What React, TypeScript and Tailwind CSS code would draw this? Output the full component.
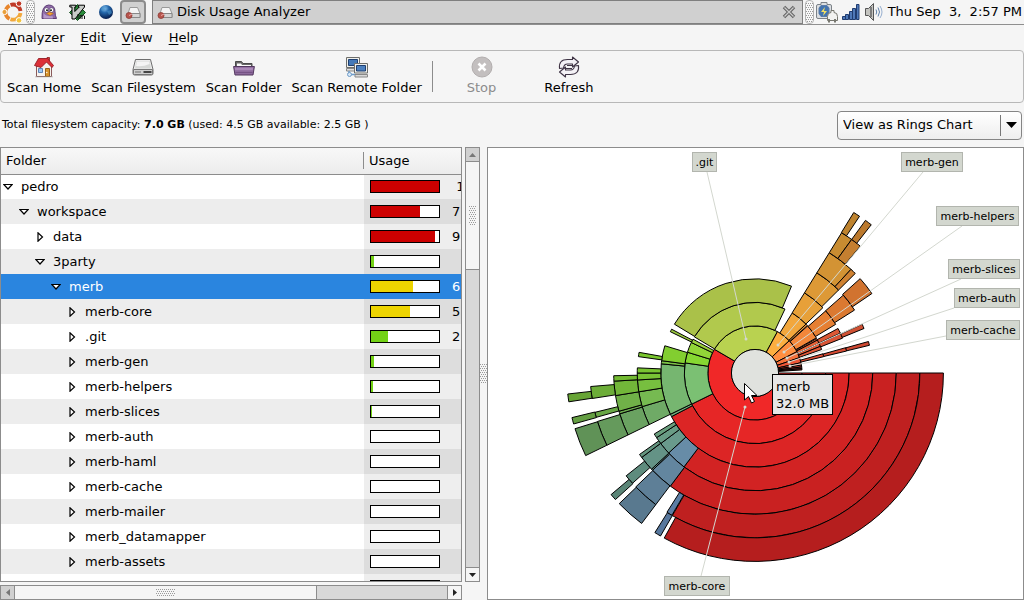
import { FC, ReactNode, useState } from 'react';

interface FolderRow {
  name: string;
  level: number;
  open?: boolean;
  usage: number;
  color?: string;
  percent?: string;
}

// [ring, start angle, end angle, base colour], angles clockwise from 3 o'clock
type Segment = [number, number, number, string];

interface ChartLabel {
  text: string;
  x: number;
  y: number;
  width: number;
  from: [number, number];
  to: [number, number];
}

const RED = '#cc0000';
const YELLOW = '#edd400';
const GREEN = '#73d216';

const folders: FolderRow[] = [
  { name: 'pedro', level: 0, open: true, usage: 100, color: RED, percent: ' 1' },
  { name: 'workspace', level: 1, open: true, usage: 72, color: RED, percent: '7' },
  { name: 'data', level: 2, usage: 94, color: RED, percent: '9' },
  { name: '3party', level: 2, open: true, usage: 4, color: GREEN },
  { name: 'merb', level: 3, open: true, usage: 62, color: YELLOW, percent: '6' },
  { name: 'merb-core', level: 4, usage: 58, color: YELLOW, percent: '5' },
  { name: '.git', level: 4, usage: 25, color: GREEN, percent: '2' },
  { name: 'merb-gen', level: 4, usage: 4, color: GREEN },
  { name: 'merb-helpers', level: 4, usage: 3, color: GREEN },
  { name: 'merb-slices', level: 4, usage: 1, color: GREEN },
  { name: 'merb-auth', level: 4, usage: 0 },
  { name: 'merb-haml', level: 4, usage: 0 },
  { name: 'merb-cache', level: 4, usage: 0 },
  { name: 'merb-mailer', level: 4, usage: 0 },
  { name: 'merb_datamapper', level: 4, usage: 0 },
  { name: 'merb-assets', level: 4, usage: 0 },
  { name: 'merb-perf', level: 4, usage: 0 },
];

const segments: Segment[] = [
  // merb-core
  [1, 0, 210.3, '#f02828'],
  [2, 0, 153.8, '#f02828'],
  [3, 0, 152.4, '#f02828'],
  [4, 0, 127.1, '#f02828'],
  [5, 0, 126.8, '#f02828'],
  [6, 0, 120.1, '#f02828'],
  [7, 0, 118.8, '#f02828'],
  // blue
  [6, 120.3, 122.3, '#749ed0'],
  [7, 120.1, 122.1, '#749ed0'],
  [4, 127.1, 137.2, '#76a0be'],
  [5, 126.8, 136.5, '#76a0be'],
  [6, 127, 136.3, '#76a0be'],
  [7, 127, 136.1, '#76a0be'],
  // teal
  [4, 137.2, 143.2, '#78b0a0'],
  [4, 143.2, 146.7, '#78b298'],
  [4, 146.7, 148.8, '#78b48e'],
  [5, 136.5, 137.1, '#78aca6'],
  [5, 137.1, 143.3, '#78b0a0'],
  [5, 143.3, 144.8, '#78b298'],
  [6, 138, 141.4, '#78b09e'],
  [7, 137.8, 139.8, '#78b09e'],
  [3, 152.4, 154, '#79ba84'],
  // green
  [2, 153.8, 188.2, '#80c878'],
  [3, 154, 185.6, '#80c67a'],
  [4, 154, 163.4, '#7fc274'],
  [5, 154, 163.2, '#7fc274'],
  [6, 154, 162.9, '#7fc274'],
  [7, 154, 162.8, '#7fc274'],
  [3, 185.6, 187.5, '#86d24c'],
  [4, 163.4, 170.8, '#86d45c'],
  [4, 170.8, 176.6, '#88da48'],
  [4, 176.6, 180, '#8ade3c'],
  [4, 180, 182.5, '#8ae038'],
  [5, 163.2, 164.3, '#84d060'],
  [5, 164.3, 170.8, '#86d456'],
  [5, 170.8, 176.7, '#88da44'],
  [5, 176.7, 178.9, '#8ade3c'],
  [6, 164.4, 166.2, '#84d258'],
  [6, 171.1, 175.3, '#88da46'],
  [7, 164.3, 166.3, '#84d258'],
  [7, 171.2, 173.6, '#88da46'],
  [2, 188.2, 197.1, '#8ce034'],
  [3, 187.5, 196.8, '#8ee034'],
  [4, 188, 190.1, '#8ae234'],
  [2, 197.1, 205.6, '#98de3a'],
  [2, 205.6, 208.6, '#a2da40'],
  [3, 206, 207.7, '#a6d844'],
  // .git
  [1, 210.3, 298.5, '#b9d250'],
  [2, 210.8, 295.1, '#b9d250'],
  [3, 211.2, 292.8, '#b9d250'],
  // merb-gen
  [1, 298.5, 316.7, '#fcae40'],
  [2, 301.8, 316.2, '#fcae40'],
  [2, 316.2, 317.8, '#f89c3e'],
  [3, 301.7, 316.1, '#fcae3e'],
  [4, 301.7, 315.2, '#fcae3e'],
  [5, 301.7, 312.8, '#fcb03e'],
  [5, 312.8, 315.2, '#f89c3c'],
  [6, 301.7, 305.9, '#fcb03e'],
  [6, 305.9, 309.7, '#f8a03c'],
  [7, 301.6, 303.7, '#fcae3e'],
  [7, 305.9, 308.1, '#f8a03c'],
  // merb-helpers
  [1, 316.7, 333, '#ff8e40'],
  [2, 318.2, 330.2, '#fc8c3c'],
  [3, 318.7, 328.9, '#fa8a38'],
  [4, 318.6, 327.7, '#fa8a38'],
  [5, 318.1, 325.8, '#fa8a38'],
  // merb-slices
  [1, 333, 341, '#f4703a'],
  [2, 330.8, 332.2, '#e86836'],
  [2, 332.2, 335.2, '#f0663a'],
  [2, 335.2, 337.8, '#ee603a'],
  [2, 337.8, 340.6, '#ea5a38'],
  [3, 331.8, 335, '#ee603a'],
  [3, 335.3, 338.3, '#ec5c3a'],
  [4, 335.5, 337.8, '#ec5c3a'],
  // merb-auth
  [1, 341, 347.4, '#ec5636'],
  [2, 344.2, 346.6, '#ea5238'],
  [3, 344.4, 346.5, '#ea5238'],
  [4, 344.5, 346.4, '#ea5238'],
  // everything small
  [1, 347.4, 350.2, '#e84a34'],
  [1, 350.2, 352.6, '#c03a2c'],
  [1, 352.6, 354.6, '#a03028'],
  [1, 354.6, 356.2, '#802820'],
];

const labels: ChartLabel[] = [
  { text: '.git', x: 692, y: 152, width: 25, from: [707, 172], to: [746, 339] },
  { text: 'merb-gen', x: 901, y: 152, width: 62, from: [923, 172], to: [778, 345] },
  { text: 'merb-helpers', x: 936, y: 206, width: 83, from: [962, 226], to: [784, 352] },
  { text: 'merb-slices', x: 948, y: 259, width: 72, from: [961, 279], to: [787, 358] },
  { text: 'merb-auth', x: 954, y: 288, width: 66, from: [954, 308], to: [789, 362] },
  { text: 'merb-cache', x: 946, y: 320, width: 74, from: [946, 336], to: [790, 366] },
  { text: 'merb-core', x: 664, y: 576, width: 66, from: [701, 576], to: [745, 407] },
];

const CX = 755;
const CY = 373;
const RING = 23.55;

const arcPath = ([ring, start, end]: Segment) => {
  const inner = ring * RING;
  const outer = inner + RING;
  const large = end - start > 180 ? 1 : 0;
  const at = (r: number, deg: number) => {
    const rad = (deg * Math.PI) / 180;
    return `${(CX + r * Math.cos(rad)).toFixed(2)} ${(CY + r * Math.sin(rad)).toFixed(2)}`;
  };
  return `M${at(inner, start)}L${at(outer, start)}A${outer} ${outer} 0 ${large} 1 ${at(outer, end)}L${at(inner, end)}A${inner} ${inner} 0 ${large} 0 ${at(inner, start)}Z`;
};

// outer rings get darker
const shade = (hex: string, ring: number) => {
  const k = 1 - (ring - 1) * 0.041;
  const part = (i: number) => Math.round(parseInt(hex.slice(i, i + 2), 16) * k);
  return `rgb(${part(1)},${part(3)},${part(5)})`;
};

const DiskIcon: FC = () => (
  <svg width="16" height="16" viewBox="0 0 16 16" className="shrink-0">
    <path d="M5 3.500h7.500l2.500 6v4h-12v-4z" fill="#f4f4f4" stroke="#999" />
    <path d="M3 9.500h12v4h-12z" fill="#d4d4d4" stroke="#888" />
    <circle cx="4" cy="11.500" r="3" fill="#b8544c" stroke="#8c3c36" strokeWidth=".8" />
    <path d="M4 11.500l3-1.500" stroke="#eaa" />
  </svg>
);

const HomeIcon: FC = () => (
  <svg width="22" height="22" viewBox="0 0 22 22">
    <path d="M3.500 9v11.500h15v-11.500l-7-6z" fill="#f6f2ee" stroke="#8a5a5a" />
    <path d="M14 1.500h2.500v4h-2.500z" fill="#d33" stroke="#822" strokeWidth=".8" />
    <path d="M1.500 9.500l4-7h9l6 7-1.500 2-5.500-5.500-5.500 5.500z" fill="#dc3038" stroke="#941c24" strokeWidth=".9" />
    <path d="M5.500 12.500h4v4h-4z" fill="#9cc8f4" stroke="#5c84b8" />
    <path d="M12.500 12.500h4v8h-4z" fill="#d8942c" stroke="#96601c" />
    <circle cx="13.800" cy="16.500" r=".7" fill="#fff" />
    <path d="M2 20.800h18" stroke="#9a9a9a" strokeWidth=".6" />
  </svg>
);

const DriveIcon: FC = () => (
  <svg width="22" height="22" viewBox="0 0 22 22">
    <path d="M3.500 3.500h15l2.500 10v4q0 1.500-1.500 1.500h-17q-1.500 0-1.500-1.500v-4z" fill="#ececec" stroke="#6e6e6e" />
    <path d="M4.500 5h13l1.500 7.500h-16z" fill="#d6d8d6" />
    <path d="M5 5.500h12l.6 2.500q-7 3-13.500 2z" fill="#f4f4f4" />
    <path d="M1.500 13.500h19v4q0 1-1 1h-17q-1 0-1-1z" fill="#cfcfcf" stroke="#777" />
    <path d="M4 15v2m2-2v2m2-2v2" stroke="#666" strokeWidth=".9" />
    <path d="M11.500 16h8" stroke="#222" strokeWidth="1.600" />
  </svg>
);

const FolderIcon: FC = () => (
  <svg width="22" height="22" viewBox="0 0 22 22">
    <path d="M2.500 11v-5.500h6l1.500 2h9v4" fill="#686868" stroke="#4a4a4a" />
    <path d="M4 9.500v-2h4l1 1.500h9v2h-14z" fill="#fafafa" />
    <path d="M.600 10.500h20.800l-1.400 8.500h-18z" fill="#8d6a9c" stroke="#53385f" />
    <path d="M1.800 11.700h18.300l-.3 2.500h-17.700z" fill="#ab89b8" />
    <path d="M2.500 16.500h17" stroke="#755284" />
  </svg>
);

const RemoteIcon: FC = () => (
  <svg width="22" height="22" viewBox="0 0 22 22">
    <path d="M.500 1.500h13v10h-13z" fill="#f0f0ec" stroke="#6e6e6a" />
    <path d="M2.500 3.500h9v6h-9z" fill="#4378b8" stroke="#1f3f70" />
    <path d="M.500 12.500h10v2.500h-10z" fill="#ddd" stroke="#888" />
    <path d="M8.500 7.500h13v9.500h-13z" fill="#f0f0ec" stroke="#6e6e6a" />
    <path d="M10.500 9.500h9v5.500h-9z" fill="#4c80c0" stroke="#1f3f70" />
    <path d="M9 18.500h12.500v2.500h-12.500z" fill="#d8d8d8" stroke="#888" />
    <path d="M3 15v3.500h6" fill="none" stroke="#6d9bc8" strokeWidth="1.500" />
    <circle cx="3.500" cy="18.500" r="2" fill="#d8e8f8" stroke="#6d9bc8" />
  </svg>
);

const StopIcon: FC = () => (
  <svg width="22" height="22" viewBox="0 0 22 22">
    <circle cx="11" cy="11" r="10" fill="#c3bfbf" stroke="#b2aeae" />
    <path d="M7.500 7.500l7 7m0-7l-7 7" stroke="#fff" strokeWidth="2.600" />
  </svg>
);

const RefreshIcon: FC = () => (
  <svg width="22" height="22" viewBox="0 0 22 22" fill="#f4f2f6" stroke="#3f3445" strokeWidth="1.100" strokeLinejoin="round">
    <path d="M1.500 12.500q-1-9 8-9h5v-2.500l6 5-6 5v-3h-5q-3.500 0-4 4z" />
    <path d="M20.500 9.500q1 9-8 9h-5v2.500l-6-5 6-5v3h5q3.500 0 4-4z" />
    <path d="M9 9.500h6m-7 3h6" fill="none" />
  </svg>
);

const UbuntuIcon: FC = () => (
  <svg width="24" height="24" viewBox="0 0 24 24" fill="none">
    <path d="M9.500 18.800a7.500 7.500 0 0 1 0-13.200" stroke="#e8862c" strokeWidth="3.800" />
    <path d="M10.500 5a7.500 7.500 0 0 1 10 6" stroke="#c03a28" strokeWidth="3.800" />
    <path d="M20.500 13a7.500 7.500 0 0 1-10 6.200" stroke="#f2a83c" strokeWidth="3.800" />
    <circle cx="4.500" cy="12" r="2.600" fill="#e8a03c" stroke="#fff" />
    <circle cx="19" cy="3.600" r="2.800" fill="#c03a28" stroke="#fff" />
    <circle cx="19" cy="20.400" r="2.800" fill="#f4c43c" stroke="#fff" />
  </svg>
);

const PidginIcon: FC = () => (
  <svg width="16" height="16" viewBox="0 0 16 16">
    <path d="M1 14.500q-.5-13 6.500-13.500 6.500 0 6.500 6.500 0 4 1.500 7z" fill="#8f6aa8" stroke="#5c3c74" />
    <path d="M2.500 9q3 4 9 3l.5 2.500h-9.500z" fill="#b79acb" />
    <circle cx="5.500" cy="6" r="2.300" fill="#fff" stroke="#4a3060" strokeWidth=".6" />
    <circle cx="10.500" cy="6" r="2.300" fill="#fff" stroke="#4a3060" strokeWidth=".6" />
    <circle cx="6" cy="6.200" r=".9" />
    <circle cx="10" cy="6.200" r=".9" />
    <path d="M5.500 9.500l3-1.500 4 1.500-3.500 2z" fill="#f0a030" stroke="#a8641c" strokeWidth=".5" />
  </svg>
);

const VimIcon: FC = () => (
  <svg width="17" height="17" viewBox="0 0 17 17">
    <path d="M8.500 .500l8 8-8 8-8-8z" fill="#2c8c3c" stroke="#124c1c" />
    <path d="M.800 1.200h6v1.800h-1v4.500l4.500-4.500h-1v-1.800h6.200v1.800l-9.500 12h-3v-12h-2.200z" fill="#c8ccc8" stroke="#000" />
    <path d="M9 10v5m2-4v4m0-3q1.500-1.500 2 0v3m0-3q1.500-1.500 2.500 0v3" fill="none" stroke="#111" />
  </svg>
);

const GlobeIcon: FC = () => (
  <svg width="16" height="16" viewBox="0 0 16 16">
    <defs>
      <radialGradient id="globe" cx="40%" cy="25%" r="75%">
        <stop offset="0" stopColor="#8cc4f0" />
        <stop offset=".4" stopColor="#2468ac" />
        <stop offset="1" stopColor="#061c4c" />
      </radialGradient>
    </defs>
    <circle cx="8" cy="8" r="7" fill="url(#globe)" />
    <path d="M3 5q2-3 5-2l-1 3-3 1zM9 7l4-1 1 3-3 2z" fill="#4a94cc" opacity=".6" />
  </svg>
);

const BatteryIcon: FC = () => (
  <svg width="22" height="22" viewBox="0 0 22 22">
    <path d="M5 1.500h6v2h3q1.500 0 1.500 1.500v11q0 1.500-1.500 1.500h-12q-1.500 0-1.500-1.500v-11q0-1.500 1.500-1.500h3z" fill="#dcdfe2" stroke="#7c8288" />
    <path d="M5 4.500h6l2 2.500v5.500l-2 3h-6l-2-3v-5.500z" fill="#4374b0" stroke="#5c7ca8" />
    <path d="M9 6l-4 5h3l-1 4 4-5h-3z" fill="#f4e060" />
    <path d="M11.500 19.500v-4q0-4 3.500-4v-2h3v2q3.500 0 3.500 4v4z" fill="#f2f2f0" stroke="#77776f" />
    <path d="M13 18v3.500m6-3.500v3.500" stroke="#77776f" strokeWidth="2" />
  </svg>
);

const SignalIcon: FC = () => (
  <svg width="18" height="18" viewBox="0 0 18 18" fill="#4e78b8" stroke="#203c70">
    <path d="M.500 13.500h3v3h-3zM3.500 11.500h3v5h-3zM7.500 8.500h3v8h-3zM10.500 5.500h3v11h-3zM14.500 1.500h2.500v15h-2.500z" />
  </svg>
);

const VolumeIcon: FC = () => (
  <svg width="20" height="20" viewBox="0 0 20 20" fill="none">
    <path d="M1.500 6.500h3l5-5v17l-5-5h-3z" fill="#c4c4c0" stroke="#555" />
    <path d="M7 5v10" stroke="#666" strokeWidth="1.500" />
    <path d="M12 7.500q1.500 2.500 0 5" stroke="#6080a8" />
    <path d="M14 5.500q3 4.500 0 9" stroke="#6080a8" />
    <path d="M16 4q4 6 0 12" stroke="#98b0d0" />
  </svg>
);

const Grip: FC<{ vertical?: boolean }> = ({ vertical }) => (
  <svg width={vertical ? 7 : 19} height={vertical ? 19 : 7} className="shrink-0">
    <defs>
      <pattern id="grip" width="4" height="4" patternUnits="userSpaceOnUse">
        <path d="M0 0h1v1h-1zM2 0h1v1h-1zM1 2h1v1h-1zM3 2h1v1h-1z" fill="#9a9a9a" />
      </pattern>
    </defs>
    <rect width="100%" height="100%" fill="url(#grip)" />
  </svg>
);

const PanelHandle: FC = () => (
  <div className="flex h-6 w-[9px] shrink-0 items-center justify-center rounded-sm border border-[#b4b4b4] bg-[#f8f8f8]">
    <Grip vertical />
  </div>
);

const ToolButton: FC<{ icon: ReactNode; label: string; disabled?: boolean }> = ({ icon, label, disabled }) => (
  <button disabled={disabled} className="flex flex-col items-center whitespace-nowrap leading-5 disabled:text-[#8c8c8c]">
    {icon}
    {label}
  </button>
);

const RingsChart: FC = () => (
  <svg
    width="535"
    height="451"
    viewBox="488 148 535 451"
    className="shrink-0 font-['DejaVu_Sans'] text-[11px]"
    role="img"
    aria-label="Rings chart of merb"
  >
    {segments.map((segment) => (
      <path
        key={segment.slice(0, 3).join('-')}
        d={arcPath(segment)}
        fill={shade(segment[3], segment[0])}
        stroke="#000"
        strokeWidth="1"
      />
    ))}
    <circle cx={CX} cy={CY} r={RING} fill="#e0e2de" stroke="#000" />
    {labels.map(({ text, x, y, width, from, to }) => (
      <g key={text}>
        <path d={`M${from}L${to}`} stroke="#d3d7cf" strokeWidth="1" />
        <circle cx={to[0]} cy={to[1]} r="1.500" fill="#d3d7cf" />
        <rect x={x + 0.5} y={y + 0.5} width={width - 1} height="19" fill="#d3d7cf" stroke="#b2b5ae" />
        <text x={x + width / 2} y={y + 14} textAnchor="middle">
          {text}
        </text>
      </g>
    ))}
    <g className="text-[13px]">
      <rect x="772.5" y="374.5" width="60" height="40" fill="#e6e6e6" stroke="#000" />
      <text x="776" y="391">merb</text>
      <text x="776" y="408">32.0 MB</text>
    </g>
    <path d="M744.500 383.500v16.500l4-3.500 3 6.500 3-1.500-3-6h5.500z" fill="#fff" stroke="#000" />
  </svg>
);

const App: FC = () => {
  const [selected, setSelected] = useState('merb');

  return (
    <div className="flex h-screen flex-col overflow-hidden bg-[#f5f5f5] font-['DejaVu_Sans',sans-serif] text-[13px] leading-5 text-black">
      <div className="flex h-[25px] shrink-0 items-center border-b border-[#8f8f8f]">
        <div className="flex flex-1 items-center">
          <button aria-label="Main menu" className="mr-0.5"><UbuntuIcon /></button>
          <PanelHandle />
          <button aria-label="Pidgin" className="ml-1.5"><PidginIcon /></button>
          <button aria-label="Vim" className="ml-3"><VimIcon /></button>
          <button aria-label="Browser" className="ml-3"><GlobeIcon /></button>
          <button aria-label="Show analyzer" className="ml-1.5 flex h-6 w-[26px] items-center justify-center rounded-sm border-2 border-[#8c8c8c] bg-[#d0d0d0]">
            <DiskIcon />
          </button>
          <div className="ml-1.5 flex h-6 flex-1 items-center gap-1 border border-[#7f7f7f] bg-[#d0d0d0] pl-1 pr-1.5">
            <DiskIcon />
            <span className="flex-1">Disk Usage Analyzer</span>
            <button aria-label="Close">
              <svg width="14" height="14" viewBox="0 0 14 14">
                <path d="M2 2l10 10m0-10l-10 10" stroke="#666" strokeWidth="3.500" />
                <path d="M2.500 2.500l9 9m0-9l-9 9" stroke="#ccc" strokeWidth="1.200" />
              </svg>
            </button>
          </div>
        </div>
        <div className="flex items-center pl-0.5 pr-0.5">
          <PanelHandle />
          <span className="ml-0.5"><BatteryIcon /></span>
          <span className="ml-1"><SignalIcon /></span>
          <span className="ml-1"><VolumeIcon /></span>
          <span className="ml-1 whitespace-pre">Thu Sep  3,  2:57 PM</span>
        </div>
      </div>

      <nav className="flex h-[25px] shrink-0 items-center gap-4 px-2">
        {['Analyzer', 'Edit', 'View', 'Help'].map((item) => (
          <button key={item}>
            <span className="underline underline-offset-2">{item[0]}</span>
            {item.slice(1)}
          </button>
        ))}
      </nav>

      <div className="flex h-[53px] shrink-0 items-center gap-2.5 rounded-sm border border-[#b8b8b8] px-1.5">
        <ToolButton icon={<HomeIcon />} label="Scan Home" />
        <ToolButton icon={<DriveIcon />} label="Scan Filesystem" />
        <ToolButton icon={<FolderIcon />} label="Scan Folder" />
        <ToolButton icon={<RemoteIcon />} label="Scan Remote Folder" />
        <div className="h-[31px] w-px bg-[#8c8c8c]" />
        <div className="flex gap-12 pl-6">
          <ToolButton icon={<StopIcon />} label="Stop" disabled />
          <ToolButton icon={<RefreshIcon />} label="Refresh" />
        </div>
      </div>

      <div className="flex h-[44px] shrink-0 items-center justify-between pl-0.5 pr-0.5">
        <p className="whitespace-pre text-[11px]">
          Total filesystem capacity: <b>7.0 GB</b> (used: 4.5 GB available: 2.5 GB )
        </p>
        <div className="relative">
          <select
            aria-label="Chart type"
            className="h-[29px] w-[185px] appearance-none rounded-sm border border-[#858585] bg-gradient-to-b from-white to-[#eeeeee] pl-[5px]"
          >
            <option>View as Rings Chart</option>
            <option>View as Treemap Chart</option>
          </select>
          <div className="pointer-events-none absolute inset-y-1 right-0 flex w-[22px] items-center justify-center border-l border-[#777]">
            <svg width="11" height="6"><path d="M0 0h11l-5.500 6z" /></svg>
          </div>
        </div>
      </div>

      <div className="flex min-h-0 flex-1">
        <div className="flex w-[480px] shrink-0 flex-col">
          <div className="flex min-h-0 flex-1 gap-[3px]">
            <div className="w-[462px] overflow-hidden border border-[#8c8c8c] bg-white">
              <table className="w-full table-fixed border-collapse">
                <thead>
                  <tr className="h-[26px] bg-gradient-to-b from-[#f8f8f8] to-[#ececec] text-left">
                    <th className="w-[363px] border-b border-[#8c8c8c] pl-[5px] font-normal">
                      <div className="border-r border-[#8c8c8c] leading-[17px]">Folder</div>
                    </th>
                    <th className="border-b border-[#8c8c8c] pl-[5px] font-normal leading-[17px]">Usage</th>
                  </tr>
                </thead>
                <tbody>
                  {folders.map((row, i) => {
                    const active = row.name === selected;
                    return (
                      <tr
                        key={row.name}
                        onClick={() => setSelected(row.name)}
                        className={`h-[25px] ${active ? 'bg-[#2a85df] text-white' : i % 2 ? 'bg-[#ededed]' : 'bg-white'}`}
                      >
                        <td>
                          <div className="flex items-center gap-2 pl-0.5" style={{ marginLeft: row.level * 16 }}>
                            <svg width="10" height="10" fill="#fff" stroke="#000" strokeWidth="1.200">
                              <path d={row.open ? 'M.800 2.500h8.400l-4.200 4.500z' : 'M3 .800v8.400l4.500-4.200z'} />
                            </svg>
                            {row.name}
                          </div>
                        </td>
                        <td className={active ? '' : i % 2 ? 'bg-[#dddddd]' : 'bg-[#eeeeee]'}>
                          <div className="flex items-center gap-3 pl-1.5">
                            <div className="h-[13px] w-[70px] shrink-0 border border-black bg-white">
                              <div className="h-full" style={{ width: `${row.usage}%`, background: row.color }} />
                            </div>
                            <span className="whitespace-pre">{row.percent}</span>
                          </div>
                        </td>
                      </tr>
                    );
                  })}
                </tbody>
              </table>
            </div>
            <div className="flex w-[15px] flex-col border border-[#8c8c8c] bg-[#d8d8d8]">
              <button aria-label="Scroll up" className="flex h-[13px] items-center justify-center bg-[#d0d0d0]">
                <svg width="7" height="4"><path d="M0 4h7l-3.500-4z" fill="#777" /></svg>
              </button>
              <div className="flex h-[109px] items-center justify-center border-y border-[#8c8c8c] bg-[#f5f5f5]">
                <Grip vertical />
              </div>
              <button aria-label="Scroll down" className="mt-auto flex h-[14px] items-center justify-center border-t border-[#8c8c8c] bg-[#f5f5f5]">
                <svg width="7" height="4"><path d="M0 0h7l-3.500 4z" fill="#222" /></svg>
              </button>
            </div>
          </div>
          <div className="mt-[3px] flex h-[15px] w-[462px] border border-[#8c8c8c] bg-[#d8d8d8]">
            <button aria-label="Scroll left" className="flex w-[13px] items-center justify-center bg-[#d0d0d0]">
              <svg width="4" height="7"><path d="M4 0v7l-4-3.500z" fill="#777" /></svg>
            </button>
            <div className="flex w-[303px] items-center justify-center border-x border-[#8c8c8c] bg-[#f5f5f5]">
              <Grip />
            </div>
            <button aria-label="Scroll right" className="ml-auto flex w-[14px] items-center justify-center border-l border-[#8c8c8c] bg-[#f5f5f5]">
              <svg width="4" height="7"><path d="M0 0v7l4-3.500z" fill="#222" /></svg>
            </button>
          </div>
        </div>
        <div className="flex w-[7px] shrink-0 items-center">
          <Grip vertical />
        </div>
        <div className="flex min-w-0 flex-1 items-center justify-center overflow-hidden border border-[#8c8c8c] bg-white">
          <RingsChart />
        </div>
      </div>
    </div>
  );
};

export default App;
